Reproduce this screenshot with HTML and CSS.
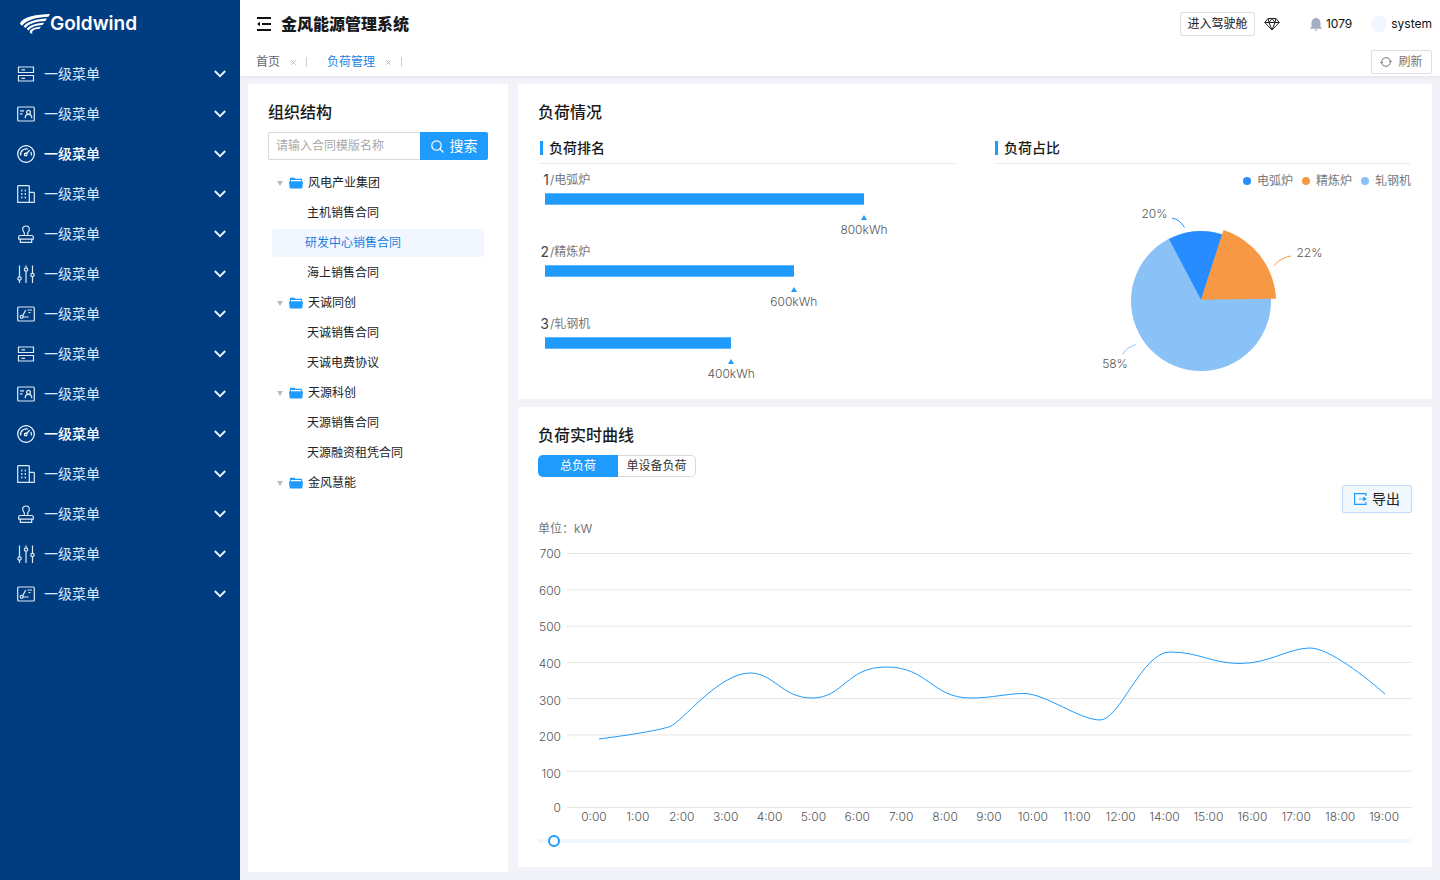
FILE: index.html
```html
<!DOCTYPE html>
<html lang="zh-CN">
<head>
<meta charset="utf-8">
<title>金风能源管理系统</title>
<link rel="stylesheet" href="styles.css">
</head>
<body>
<svg class="sprite" aria-hidden="true">
  <symbol id="i-server" viewBox="0 0 18 18"><path d="M1.5 2h15v5.5h-15zM1.5 10.5h15V16h-15zM4.5 4.8h3.500M4.500 13.300H8"/></symbol>
  <symbol id="i-card" viewBox="0 0 18 18"><rect x=".7" y="2" width="16.600" height="14" rx="1"/><circle cx="11.500" cy="7.300" r="1.900"/><path d="M8.300 13.200v-.7c0-1.800 1.300-3.100 3.200-3.100s3.200 1.300 3.200 3.100v.7M3 5.800h4M3 8.800h2.500"/></symbol>
  <symbol id="i-gauge" viewBox="0 0 18 18"><circle cx="9" cy="9" r="8.300"/><path d="M3.700 10.500A5.500 5.500 0 0 1 11 4.200M13.900 7a5.500 5.500 0 0 1 .4 3.500M9.500 8.500l3.300-3.300"/><circle cx="8.700" cy="9.500" r="1.300"/></symbol>
  <symbol id="i-building" viewBox="0 0 18 18"><path d="M.7 17.300V1.500q0-.8.8-.8h10q.8 0 .8.800v15.800zM12.300 7.300h4.200q.8 0 .8.800v9.200h-5"/><path stroke-dasharray="2 1.500" d="M4.800 4.500v10M8.300 4.500v10"/></symbol>
  <symbol id="i-stamp" viewBox="0 0 18 18"><path d="M7.300 10.500V7.800C6.300 6.800 5.700 5.800 5.700 4.300a3.300 3.300 0 0 1 6.600 0c0 1.500-.6 2.500-1.600 3.500v2.700M3 10.500h12q1.300 0 1.300 1.300v2.400H1.700v-2.400q0-1.300 1.300-1.300zM3.300 14.500v2.800h11.400v-2.800"/></symbol>
  <symbol id="i-sliders" viewBox="0 0 18 18"><path d="M2.500.5v11.300M2.500 15.200V18M9 .5v2.300M9 6.200V18M15.500.5v7.800M15.500 11.700V18"/><circle cx="2.500" cy="13.500" r="1.700"/><circle cx="9" cy="4.500" r="1.700"/><circle cx="15.500" cy="10" r="1.700"/></symbol>
  <symbol id="i-draft" viewBox="0 0 18 18"><rect x=".7" y="2" width="16.600" height="14" rx="1"/><circle cx="4.700" cy="11.800" r="1.500"/><path d="M5.700 10.700 8.700 5M6.200 12h5.500M10.500 5h4.500M11.500 7.500h2"/></symbol>
  <symbol id="i-down" viewBox="0 0 12 12"><path d="M.8 3 6 8.200 11.200 3"/></symbol>
  <symbol id="i-close" viewBox="0 0 5 5"><path d="M.3.3l4.400 4.400M4.700.3.3 4.700"/></symbol>
  <symbol id="i-folder" viewBox="0 0 14 12"><path fill="currentColor" d="M1 4V.8h4.500l1 1H13V4h-1V3H2v1zM0 4.200h14l-.6 6.300q-.1 1-1 1H1.600q-.9 0-1-1z"/></symbol>
</svg>

<div class="app">
  <aside class="sidebar">
    <a class="logo" href="#">
      <svg class="logo-mark" viewBox="0 0 30 20" aria-hidden="true"><path d="M30 0C17 .2 3 3 0 9c0 1 1 2 2 2.700C7 5.500 18 3 28.500 2.700z"/><path d="M27 4.500C17 5 7.500 7 3.600 12.500l1.800 1.500C9.500 9 17 7.500 25.500 7z"/><path d="M24.300 8.700C17 9.200 10 10.800 6.700 15l1.800 1.400c3-3.600 7.500-4.900 14-5.400z"/><path d="M21 12.700c-7 .3-12.500 3-11 6.300l2.500 1c-1.500-3.300 2-5 7-5.200z"/></svg>
      <span>Goldwind</span>
    </a>
    <nav>
      <ul class="menu">
        <li><button class="menu-item"><svg class="menu-icon"><use href="#i-server"/></svg><span>一级菜单</span><svg class="menu-arrow"><use href="#i-down"/></svg></button></li>
        <li><button class="menu-item"><svg class="menu-icon"><use href="#i-card"/></svg><span>一级菜单</span><svg class="menu-arrow"><use href="#i-down"/></svg></button></li>
        <li><button class="menu-item is-strong"><svg class="menu-icon"><use href="#i-gauge"/></svg><span>一级菜单</span><svg class="menu-arrow"><use href="#i-down"/></svg></button></li>
        <li><button class="menu-item"><svg class="menu-icon"><use href="#i-building"/></svg><span>一级菜单</span><svg class="menu-arrow"><use href="#i-down"/></svg></button></li>
        <li><button class="menu-item"><svg class="menu-icon"><use href="#i-stamp"/></svg><span>一级菜单</span><svg class="menu-arrow"><use href="#i-down"/></svg></button></li>
        <li><button class="menu-item"><svg class="menu-icon"><use href="#i-sliders"/></svg><span>一级菜单</span><svg class="menu-arrow"><use href="#i-down"/></svg></button></li>
        <li><button class="menu-item"><svg class="menu-icon"><use href="#i-draft"/></svg><span>一级菜单</span><svg class="menu-arrow"><use href="#i-down"/></svg></button></li>
        <li><button class="menu-item"><svg class="menu-icon"><use href="#i-server"/></svg><span>一级菜单</span><svg class="menu-arrow"><use href="#i-down"/></svg></button></li>
        <li><button class="menu-item"><svg class="menu-icon"><use href="#i-card"/></svg><span>一级菜单</span><svg class="menu-arrow"><use href="#i-down"/></svg></button></li>
        <li><button class="menu-item is-strong"><svg class="menu-icon"><use href="#i-gauge"/></svg><span>一级菜单</span><svg class="menu-arrow"><use href="#i-down"/></svg></button></li>
        <li><button class="menu-item"><svg class="menu-icon"><use href="#i-building"/></svg><span>一级菜单</span><svg class="menu-arrow"><use href="#i-down"/></svg></button></li>
        <li><button class="menu-item"><svg class="menu-icon"><use href="#i-stamp"/></svg><span>一级菜单</span><svg class="menu-arrow"><use href="#i-down"/></svg></button></li>
        <li><button class="menu-item"><svg class="menu-icon"><use href="#i-sliders"/></svg><span>一级菜单</span><svg class="menu-arrow"><use href="#i-down"/></svg></button></li>
        <li><button class="menu-item"><svg class="menu-icon"><use href="#i-draft"/></svg><span>一级菜单</span><svg class="menu-arrow"><use href="#i-down"/></svg></button></li>
      </ul>
    </nav>
  </aside>

  <div class="page">
    <header class="topbar">
      <div class="brand-row">
        <button class="icon-btn" aria-label="收起菜单"><svg class="fold" viewBox="0 0 14 14"><path d="M0 1h14M5 7h9M0 13h14" stroke="#111" stroke-width="2"/><path d="M0 7l3-2.300v4.600z" fill="#111"/></svg></button>
        <h1>金风能源管理系统</h1>
        <div class="user-tools">
          <button class="btn-cockpit">进入驾驶舱</button>
          <button class="icon-btn diamond-btn" aria-label="主题"><svg class="diamond" viewBox="0 0 16 14"><path d="M4 1.500h8L15.200 5.500 8 13 .8 5.500zM.8 5.500h14.400M4 1.500l1 4L8 13l3-7.500 1-4M5 5.500 8 1.500l3 4" fill="none" stroke="#222" stroke-linejoin="round"/></svg></button>
          <a class="notice" href="#"><svg class="bell" viewBox="0 0 12 14" aria-hidden="true"><path fill="#a3aec2" d="M5.200 1.200a.8.800 0 0 1 1.600 0C9.200 1.600 10.500 3.400 10.500 5.700V10l1.500 1v.8H0V11l1.500-1V5.700C1.500 3.400 2.800 1.600 5.200 1.200zM4.300 12.500h3.400q-.5 1.300-1.700 1.300t-1.700-1.300z"/></svg>1079</a>
          <a class="user" href="#"><span class="avatar"></span>system</a>
        </div>
      </div>
      <div class="tab-row">
        <div class="tab"><a href="#">首页</a><button class="tab-close" aria-label="关闭首页"><svg><use href="#i-close"/></svg></button></div>
        <div class="tab is-active"><a href="#">负荷管理</a><button class="tab-close" aria-label="关闭负荷管理"><svg><use href="#i-close"/></svg></button></div>
        <button class="btn-refresh"><svg class="refresh" viewBox="0 0 12 12" aria-hidden="true"><path d="M1.600 5A4.600 4.600 0 0 1 10.500 5M10.400 7A4.600 4.600 0 0 1 1.500 7" fill="none" stroke="#777"/><path d="M8.800 5H12l-1.600 2zM0 7h3.200L1.600 5z" fill="#777"/></svg>刷新</button>
      </div>
    </header>

    <main class="content">
      <section class="card org">
        <h2>组织结构</h2>
        <form class="search">
          <input type="text" placeholder="请输入合同模版名称" aria-label="合同模版名称">
          <button type="button"><svg class="lens" viewBox="0 0 13 13" aria-hidden="true"><circle cx="5.500" cy="5.500" r="4.700"/><path d="M9 9l3.500 3.500"/></svg>搜索</button>
        </form>
        <ul class="tree">
          <li><button class="node"><span class="caret"></span><svg class="folder"><use href="#i-folder"/></svg>风电产业集团</button>
            <ul>
              <li><a class="leaf" href="#">主机销售合同</a></li>
              <li><a class="leaf is-selected" href="#">研发中心销售合同</a></li>
              <li><a class="leaf" href="#">海上销售合同</a></li>
            </ul>
          </li>
          <li><button class="node"><span class="caret"></span><svg class="folder"><use href="#i-folder"/></svg>天诚同创</button>
            <ul>
              <li><a class="leaf" href="#">天诚销售合同</a></li>
              <li><a class="leaf" href="#">天诚电费协议</a></li>
            </ul>
          </li>
          <li><button class="node"><span class="caret"></span><svg class="folder"><use href="#i-folder"/></svg>天源科创</button>
            <ul>
              <li><a class="leaf" href="#">天源销售合同</a></li>
              <li><a class="leaf" href="#">天源融资租凭合同</a></li>
            </ul>
          </li>
          <li><button class="node"><span class="caret"></span><svg class="folder"><use href="#i-folder"/></svg>金风慧能</button></li>
        </ul>
      </section>

      <div class="panels">
        <section class="card load">
          <h2>负荷情况</h2>
          <div class="split">
            <div class="half">
              <h3>负荷排名</h3>
              <ol class="rank">
                <li>
                  <div class="rank-name"><b>1</b><span>/电弧炉</span></div>
                  <div class="bar" style="width:77.8%"><i></i><div class="mark">800kWh</div></div>
                </li>
                <li>
                  <div class="rank-name"><b>2</b><span>/精炼炉</span></div>
                  <div class="bar" style="width:60.7%"><i></i><div class="mark">600kWh</div></div>
                </li>
                <li>
                  <div class="rank-name"><b>3</b><span>/轧钢机</span></div>
                  <div class="bar" style="width:45.4%"><i></i><div class="mark">400kWh</div></div>
                </li>
              </ol>
            </div>
            <div class="half">
              <h3>负荷占比</h3>
              <ul class="legend">
                <li><span class="dot dot-blue"></span>电弧炉</li>
                <li><span class="dot dot-orange"></span>精炼炉</li>
                <li><span class="dot dot-sky"></span>轧钢机</li>
              </ul>
              <svg class="pie" viewBox="0 0 245 180" role="img" aria-label="负荷占比">
                <circle cx="121" cy="101" r="70" fill="#8ac2f8"/>
                <path d="M121 99.800 89 39A70 70 0 0 1 142.300 34.500z" fill="#268cff"/>
                <path d="M121 99.800 143.500 30A76 76 0 0 1 196 98.700z" fill="#f79845"/>
                <g fill="none">
                  <path d="M92 18q8 1.500 12.500 9.500" stroke="#268cff"/>
                  <path d="M193.700 65.700q7-8 17.300-9.700" stroke="#f79845"/>
                  <path d="M42.700 154.300q4-7 13-9.700" stroke="#8ac2f8"/>
                </g>
                <g class="pie-text">
                  <text x="74.500" y="18">20%</text>
                  <text x="229.500" y="57">22%</text>
                  <text x="35" y="168">58%</text>
                </g>
              </svg>
            </div>
          </div>
        </section>

        <section class="card trend">
          <h2>负荷实时曲线</h2>
          <div class="segment">
            <button class="is-on">总负荷</button>
            <button>单设备负荷</button>
          </div>
          <button class="btn-export"><svg class="export" viewBox="0 0 13 12" aria-hidden="true"><path d="M12 3V.6H.6v10.800H12V9" fill="none" stroke="#1f9bfd" stroke-width="1.200"/><path d="M5 6h6M9.700 4.200 12.200 6 9.700 7.800z" fill="#1f9bfd" stroke="#1f9bfd" stroke-width=".8"/></svg>导出</button>
          <p class="unit">单位：kW</p>
          <div class="chart">
            <ul class="y-axis"><li>700</li><li>600</li><li>500</li><li>400</li><li>300</li><li>200</li><li>100</li><li>0</li></ul>
            <div class="plot">
              <svg class="curve" viewBox="0 0 845 255" preserveAspectRatio="none" role="img" aria-label="负荷实时曲线">
                <path class="grid" d="M0 .5H845M0 36.800H845M0 73.100H845M0 109.400H845M0 145.600H845M0 181.900H845M0 218.200H845M0 254.500H845"/>
                <path class="line" d="M32 186C55 183 90 178 103 173.500C115 169 152 120 183 120C207 120 215 145 245 145C277 145 279 114 319 114C362 114 364 145 404 145C425 145 440 140.500 457 140.500C478 140.500 513 167 533 167C553 167 575 99 603 99C632 99 645 110.500 673 110.500C702 110.500 722 95 743 95C762 95 800 125 818 141"/>
              </svg>
              <ul class="x-axis"><li>0:00</li><li>1:00</li><li>2:00</li><li>3:00</li><li>4:00</li><li>5:00</li><li>6:00</li><li>7:00</li><li>8:00</li><li>9:00</li><li>10:00</li><li>11:00</li><li>12:00</li><li>14:00</li><li>15:00</li><li>16:00</li><li>17:00</li><li>18:00</li><li>19:00</li></ul>
            </div>
          </div>
          <input class="slider" type="range" min="0" max="1000" value="12" aria-label="时间范围">
        </section>
      </div>
    </main>
  </div>
</div>
</body>
</html>
```

FILE: styles.css
```css
* { box-sizing: border-box; }
body { margin: 0; background: #f2f3f8; color: #333; font: 12px/18px Inter, "Noto Sans CJK SC", sans-serif; }
ul, ol { list-style: none; margin: 0; padding: 0; }
a { color: inherit; text-decoration: none; }
button { font: inherit; color: inherit; background: none; border: 0; padding: 0; cursor: pointer; }
svg { display: block; flex: none; }
h1, h2, h3, p { margin: 0; }
.sprite { display: none; }

.app { display: flex; min-height: 100vh; }
.sidebar { width: 240px; flex: none; background: #003d80; color: #fff; }
.logo { display: flex; align-items: center; height: 48px; padding-left: 20px; font-size: 19px; font-weight: 600; line-height: 24px; }
.logo-mark { width: 30px; height: 20px; fill: #fff; }
.menu { padding-top: 6px; }
.menu-item { display: flex; align-items: center; width: 100%; height: 40px; padding: 0 14px 0 17px; font-size: 14px; text-align: left; color: #dfe9f4; }
.menu-item span { flex: 1; margin-left: 9px; }
.menu-icon { width: 18px; height: 18px; fill: none; stroke: currentColor; stroke-width: 1.2px; }
.menu-arrow { width: 12px; height: 12px; fill: none; stroke: #f0f5fa; stroke-width: 1.8px; }
.menu-item.is-strong { font-weight: 500; color: #fff; }

.page { flex: 1; min-width: 0; display: flex; flex-direction: column; }
.topbar { background: #fff; box-shadow: 0 1px 4px rgba(0, 21, 41, .08); }
.brand-row { display: flex; align-items: center; height: 48px; padding: 0 8px 0 17px; }
.fold { width: 14px; height: 14px; }
h1 { margin-left: 10px; font-size: 16px; font-weight: 900; line-height: 24px; color: #1a1a1a; }
.user-tools { display: flex; align-items: center; margin-left: auto; color: #111; }
.btn-cockpit { height: 24px; width: 75px; border: 1px solid #dcdee8; border-radius: 2px; color: #222; }
.diamond-btn { margin: 0 30px 0 9px; }
.diamond { width: 16px; height: 14px; }
.notice, .user { display: flex; align-items: center; gap: 4px; }
.bell { width: 12px; height: 14px; }
.avatar { width: 16px; height: 16px; border-radius: 50%; background: #f0f7ff; }
.user { margin-left: 19px; }
.tab-row { display: flex; align-items: center; height: 28px; padding: 0 8px 0 16px; color: #666; }
.tab { display: flex; align-items: center; margin-right: 20px; }
.tab::after { content: ""; width: 1px; height: 10px; background: #d0d0d0; }
.tab-close { display: flex; justify-content: center; width: 26px; }
.tab-close svg { width: 5px; height: 5px; fill: none; stroke: #aaa; stroke-width: .8px; }
.is-active a { color: #1b83e5; }
.btn-refresh { display: flex; align-items: center; justify-content: center; gap: 6px; width: 61px; height: 24px; margin-left: auto; border: 1px solid #dcdee8; border-radius: 2px; color: #777; }
.refresh { width: 12px; height: 12px; }

.content { flex: 1; display: flex; gap: 10px; padding: 8px; }
.card { background: #fff; padding: 16px 20px 20px; }
.org { width: 260px; flex: none; }
.panels { flex: 1; min-width: 0; display: flex; flex-direction: column; gap: 8px; }
h2 { font-size: 16px; line-height: 24px; font-weight: 500; color: #1a1a1a; }
.search { display: flex; height: 28px; margin-top: 8px; }
.search input { flex: 1; min-width: 0; padding: 0 7px; border: 1px solid #d9d9d9; border-right: 0; border-radius: 2px 0 0 2px; font: inherit; }
.search input::placeholder { color: #aaa; }
.search button { display: flex; align-items: center; justify-content: center; gap: 6px; width: 68px; background: #1f9bfd; color: #fff; font-size: 14px; border-radius: 0 2px 2px 0; }
.lens { width: 13px; height: 13px; fill: none; stroke: #fff; stroke-width: 1.2px; }
.tree { margin: 9px 4px 0; }
.node, .leaf { display: flex; align-items: center; width: 100%; height: 28px; margin-bottom: 2px; color: #222; }
.node { padding-left: 5px; }
.leaf { padding-left: 35px; border-radius: 2px; }
.leaf.is-selected { padding-left: 33px; background: #f2f7ff; color: #1b7de0; }
.caret { border: 3px solid transparent; border-top: 5px solid #bbb; border-bottom: 0; }
.folder { width: 14px; height: 12px; margin: 0 5px 0 6px; color: #1f9bfd; }

.load { padding-bottom: 12px; }
.split { display: grid; grid-template-columns: 1fr 1fr; gap: 40px; margin: 14px 2px 0; }
.half { display: flex; flex-direction: column; }
h3 { display: flex; align-items: center; gap: 6px; padding-bottom: 5px; border-bottom: 1px solid #e8e8e8; font-size: 14px; line-height: 20px; font-weight: 500; color: #1a1a1a; }
h3::before { content: ""; width: 3px; height: 14px; background: #1f9bfd; }
.rank { padding: 7px 0 0 5px; color: #777; }
.rank li { height: 72px; }
.rank-name { display: flex; align-items: center; gap: 1px; height: 18px; margin-left: -5px; }
.rank-name b { width: 9px; text-align: right; font-size: 14px; font-weight: 400; color: #444; }
.bar { margin-top: 4px; }
.bar i { display: block; height: 12px; background: #1f9bfd; border: solid #62b9fe; border-width: 1px 0; }
.mark { display: flex; flex-direction: column; align-items: center; width: 50px; margin: 10px -25px 0 auto; line-height: 20px; }
.mark, .pie-text, .y-axis, .x-axis { font-weight: 300; color: #555; }
.mark::before { content: ""; border: 3px solid transparent; border-bottom: 5px solid #1f9bfd; border-top: 0; }
.legend { display: flex; justify-content: flex-end; gap: 9px; margin: 8px -1px 0 0; color: #777; }
.legend li { display: flex; align-items: center; gap: 6px; }
.dot { width: 8px; height: 8px; border-radius: 50%; }
.dot-blue { background: #268cff; }
.dot-orange { background: #f79845; }
.dot-sky { background: #8ac2f8; }
.pie { width: 245px; height: 180px; margin: 10px auto 0; }
.pie-text { font-size: 12px; text-anchor: middle; fill: #555; }

.trend { display: flex; flex-direction: column; }
.segment { display: flex; align-self: flex-start; margin-top: 8px; }
.segment button { width: 78px; height: 22px; border: 1px solid #d9d9d9; border-left: 0; border-radius: 0 5px 5px 0; }
.segment .is-on { width: 80px; border: 0; border-radius: 5px 0 0 5px; background: #1f9bfd; color: #fff; }
.btn-export { display: flex; align-items: center; justify-content: center; gap: 5px; align-self: flex-end; width: 70px; height: 28px; margin-top: 8px; border: 1px solid #bddcf7; border-radius: 2px; background: #f0f7fd; font-size: 14px; color: #222; }
.export { width: 13px; height: 12px; }
.unit { margin-top: 7px; color: #777; }
.chart { display: flex; gap: 6px; margin-top: 8px; }
.y-axis { display: grid; grid-template-rows: repeat(6, 1fr) 34px 14px; width: 23px; height: 268px; line-height: 16px; text-align: right; }
.plot { flex: 1; min-width: 0; padding-top: 7px; }
.curve { width: 100%; height: 255px; fill: none; }
.curve path { vector-effect: non-scaling-stroke; }
.grid { stroke: #e6e6e6; }
.line { stroke: #1f9bfd; stroke-width: 1px; }
.x-axis { display: flex; padding: 0 6px 0 5px; }
.x-axis li { flex: 1 1 0; min-width: 0; text-align: center; white-space: nowrap; }
.slider { -webkit-appearance: none; appearance: none; width: 100%; height: 12px; margin: 9px 0 0; background: linear-gradient(#f0f7fd, #f0f7fd) center / 100% 4px no-repeat; }
.slider::-webkit-slider-thumb { -webkit-appearance: none; width: 12px; height: 12px; border: 2px solid #1f9bfd; border-radius: 50%; background: #fff; }
```
